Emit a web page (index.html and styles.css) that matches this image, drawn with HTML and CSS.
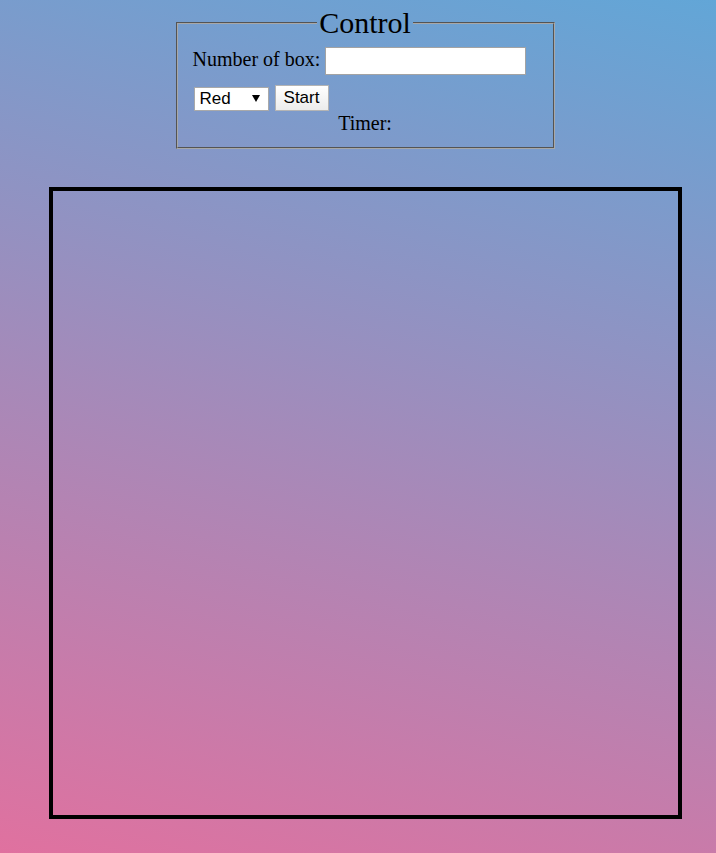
FILE: index.html
```html
<!DOCTYPE html>
<html lang="en">
<head>
<meta charset="utf-8">
<title>Boxes</title>
<link rel="stylesheet" href="styles.css">
</head>
<body>
<fieldset class="control">
  <legend class="control-title">Control</legend>
  <div class="row row-count">
    <label class="count-label" for="count">Number of box:</label>
    <input class="count-input" id="count" type="text">
  </div>
  <div class="row row-actions">
    <div class="select-wrap">
      <select class="color-select">
        <option>Red</option>
        <option>Green</option>
        <option>Blue</option>
      </select>
    </div>
    <button class="start-btn" type="button">Start</button>
  </div>
  <div class="timer">Timer:</div>
</fieldset>
<div class="board"></div>
</body>
</html>
```

FILE: styles.css
```css
html {
  min-height: 100%;
  background: linear-gradient(15deg, #e0719f 0%, #62a6d7 100%);
}

body {
  margin: 0;
  padding: 8px 8px 8px 22px;
  min-height: 853px;
  box-sizing: border-box;
  font-family: "Liberation Serif", "Times New Roman", serif;
  font-size: 20px;
  color: #000;
  overflow: hidden;
}

.control {
  width: 345px;
  margin: 0 auto;
  padding: 0 15px 12px;
  border: 2px groove #a8a8a8;
}

.control-title {
  margin: 0 auto;
  padding: 0 2px;
  font-size: 30px;
  line-height: 30px;
}

.row {
  display: flex;
}

.row-count {
  margin-top: 9px;
  gap: 5px;
  align-items: flex-start;
}

.count-label {
  line-height: 24px;
}

.count-input {
  margin: 0;
  padding: 0 4px;
  box-sizing: border-box;
  width: 201px;
  height: 28px;
  border: 1px solid #a3a3a3;
  background: #fff;
  font-family: "Liberation Sans", Arial, sans-serif;
  font-size: 16px;
}

.row-actions {
  margin-top: 10px;
  gap: 6px;
  padding-left: 1px;
  align-items: center;
}

.select-wrap {
  position: relative;
  width: 75px;
  height: 24px;
}

.select-wrap::after {
  content: "";
  position: absolute;
  right: 9px;
  top: 9px;
  border-left: 4px solid transparent;
  border-right: 4px solid transparent;
  border-top: 7px solid #000;
  pointer-events: none;
}

.color-select {
  -webkit-appearance: none;
  appearance: none;
  width: 75px;
  height: 24px;
  margin: 0;
  padding: 0 0 0 5px;
  box-sizing: border-box;
  border: 1px solid #a9a9a9;
  border-radius: 0;
  background: #fff;
  color: #000;
  font-family: "Liberation Sans", Arial, sans-serif;
  font-size: 17px;
}

.start-btn {
  width: 54px;
  height: 26px;
  margin: 0;
  padding: 0;
  box-sizing: border-box;
  border: 1px solid #b4b4b4;
  border-radius: 0;
  background: linear-gradient(#ffffff, #ececec);
  color: #000;
  font-family: "Liberation Sans", Arial, sans-serif;
  font-size: 17px;
}

.timer {
  margin-top: 1px;
  text-align: center;
  line-height: 23px;
}

.board {
  width: 625px;
  height: 624px;
  margin: 38px auto 0;
  border: 4px solid #000;
}
```
